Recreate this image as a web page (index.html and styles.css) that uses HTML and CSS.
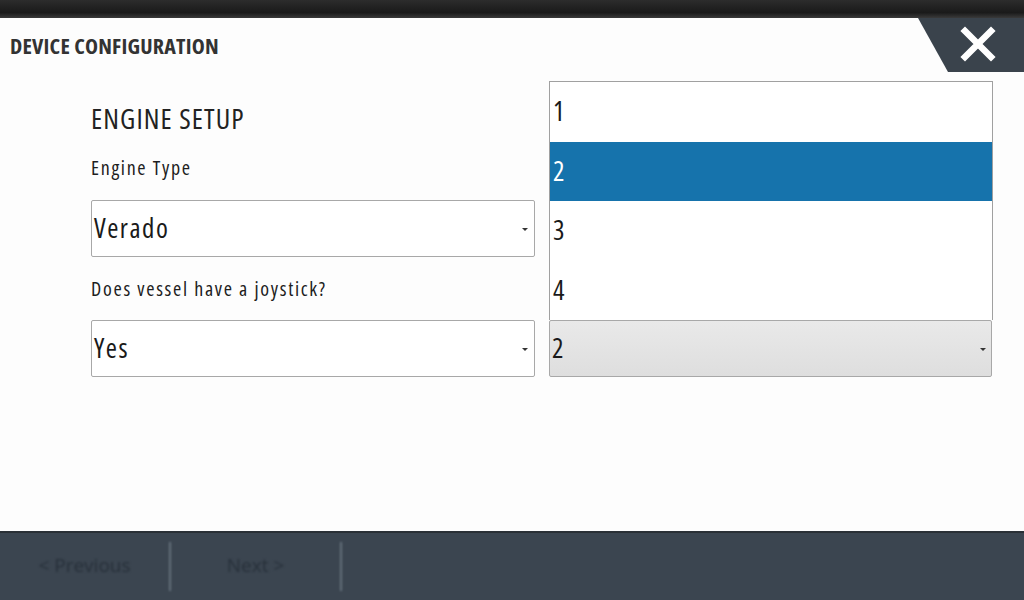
FILE: index.html
```html
<!DOCTYPE html>
<html>
<head>
<meta charset="utf-8">
<link rel="stylesheet" href="styles.css">
</head>
<body>
<div class="screen">
  <div class="topbar"></div>
  <div class="dialog">
    <div class="header">
      <h1 class="title">DEVICE CONFIGURATION</h1>
      <button class="close" aria-label="Close">
        <svg width="36" height="36" viewBox="0 0 36 36"><path d="M5 5 L31 31 M31 5 L5 31" stroke="#fff" stroke-width="6.5" stroke-linecap="square"/></svg>
      </button>
    </div>
    <div class="form">
      <h2 class="heading">ENGINE SETUP</h2>
      <div class="label l1">Engine Type</div>
      <div class="select s1"><span>Verado</span><i class="arrow"></i></div>
      <div class="label l2">Does vessel have a joystick?</div>
      <div class="select s2"><span>Yes</span><i class="arrow"></i></div>
      <div class="combo">
        <ul class="menu">
          <li>1</li>
          <li class="sel">2</li>
          <li>3</li>
          <li>4</li>
        </ul>
        <div class="select open"><span>2</span><i class="arrow"></i></div>
      </div>
    </div>
  </div>
  <div class="footer">
    <div class="fbtn">&lt; Previous</div>
    <div class="fbtn">Next &gt;</div>
  </div>
</div>
</body>
</html>
```
FILE: styles.css
```css
html, body {
  margin: 0;
  padding: 0;
  background: #fff;
}
body {
  font-family: "Open Sans", "DejaVu Sans", sans-serif;
  font-stretch: 75%;
  color: #1e1e1e;
}
.screen {
  width: 1024px;
  height: 600px;
  overflow: hidden;
  display: flex;
  flex-direction: column;
}
.topbar {
  height: 18px;
  flex: none;
  background: linear-gradient(#2c2c2c, #1a1a1a 70%, #3a3a3a);
}
.dialog {
  flex: none;
  height: 513px;
  background: #fdfdfd;
  display: flex;
  flex-direction: column;
}
.header {
  height: 54px;
  display: flex;
  align-items: flex-start;
  justify-content: space-between;
}
.title {
  margin: 14px 0 0 10px;
  font-size: 22px;
  line-height: 26px;
  font-weight: 700;
  color: #333;
  letter-spacing: 0.2px;
}
.close {
  width: 106px;
  height: 54px;
  border: none;
  padding: 0 0 0 14px;
  margin: 0;
  background: #3a434c;
  clip-path: polygon(0 0, 100% 0, 100% 100%, 30px 100%);
  display: flex;
  align-items: center;
  justify-content: center;
}
.close svg { margin-top: -2px; }
.form {
  display: grid;
  grid-template-columns: 444px 444px;
  column-gap: 14px;
  padding-left: 91px;
  padding-top: 32px;
}
.heading {
  grid-column: 1;
  margin: -3px 0 0;
  font-size: 28px;
  line-height: 34px;
  font-weight: 400;
  letter-spacing: 1.1px;
  color: #222;
}
.label {
  grid-column: 1;
  font-size: 20px;
  line-height: 26px;
  letter-spacing: 1.7px;
  color: #1e1e1e;
}
.l1 { margin-top: 20px; }
.s1 { grid-column: 1; margin-top: 19px; }
.l2 { margin-top: 19px; }
.s2 { grid-column: 1; grid-row: 5; margin-top: 18px; }
.select {
  box-sizing: border-box;
  height: 57px;
  border: 1px solid #a8a8a8;
  border-radius: 2px;
  background: #fff;
  display: flex;
  align-items: center;
  justify-content: space-between;
  padding: 0 6px 3px 2px;
  font-size: 27px;
  letter-spacing: 1.5px;
  color: #1a1a1a;
}
.arrow {
  width: 0;
  height: 0;
  border-left: 3px solid transparent;
  border-right: 3px solid transparent;
  border-top: 3px solid #333;
  margin-top: 4px;
}
.combo {
  grid-column: 2;
  grid-row: 5;
  margin-top: 18px;
  position: relative;
}
.select.open {
  width: 443px;
  background: linear-gradient(#e9e9e9, #dedede);
  padding-right: 5px;
}
.menu {
  position: absolute;
  left: 0;
  bottom: 100%;
  width: 444px;
  box-sizing: border-box;
  margin: 0;
  padding: 0;
  list-style: none;
  border: 1px solid #a0a0a0;
  border-bottom: none;
  background: #fff;
}
.menu li {
  height: 59.5px;
  display: flex;
  align-items: center;
  padding-left: 3px;
  padding-bottom: 2px;
  box-sizing: border-box;
  font-size: 27px;
  color: #1a1a1a;
}
.menu li.sel {
  background: #1673ac;
  color: #fff;
}
.footer {
  flex: 1;
  background: #3b4550;
  border-top: 2px solid #2a3036;
  display: flex;
}
.fbtn {
  width: 169px;
  border-right: 2px solid #66717b;
  margin: 9px 0 9px;
  display: flex;
  align-items: center;
  justify-content: center;
  padding-bottom: 4px;
  font-size: 19px;
  font-stretch: 100%;
  color: #27303a;
  filter: blur(1px);
}
```
